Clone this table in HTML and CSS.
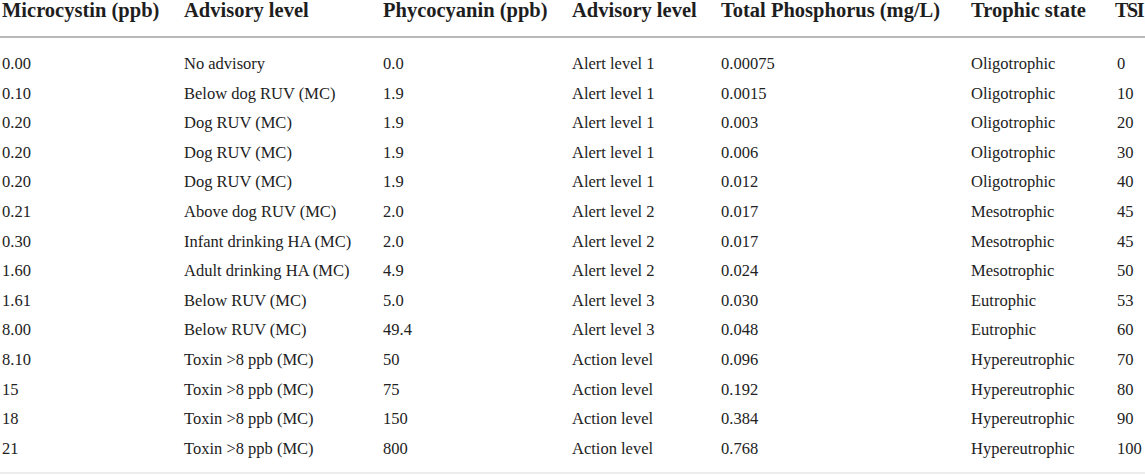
FILE: index.html
```html
<!DOCTYPE html>
<html>
<head>
	<title>Advisory levels</title>
	<meta http-equiv="Content-Type" content="text/html; charset=UTF-8">
	<link rel="stylesheet" href="styles.css">
</head>
<body>
	<table class="levels">
		<colgroup>
			<col class="c-mc">
			<col class="c-adv1">
			<col class="c-pc">
			<col class="c-adv2">
			<col class="c-tp">
			<col class="c-troph">
			<col class="c-tsi">
		</colgroup>
		<thead>
			<tr>
				<th>Microcystin (ppb)</th>
				<th>Advisory level</th>
				<th>Phycocyanin (ppb)</th>
				<th>Advisory level</th>
				<th>Total Phosphorus (mg/L)</th>
				<th>Trophic state</th>
				<th class="tsi-head">TSI</th>
			</tr>
		</thead>
		<tbody>
			<tr><td>0.00</td><td>No advisory</td><td>0.0</td><td>Alert level 1</td><td>0.00075</td><td>Oligotrophic</td><td>0</td></tr>
			<tr><td>0.10</td><td>Below dog RUV (MC)</td><td>1.9</td><td>Alert level 1</td><td>0.0015</td><td>Oligotrophic</td><td>10</td></tr>
			<tr><td>0.20</td><td>Dog RUV (MC)</td><td>1.9</td><td>Alert level 1</td><td>0.003</td><td>Oligotrophic</td><td>20</td></tr>
			<tr><td>0.20</td><td>Dog RUV (MC)</td><td>1.9</td><td>Alert level 1</td><td>0.006</td><td>Oligotrophic</td><td>30</td></tr>
			<tr><td>0.20</td><td>Dog RUV (MC)</td><td>1.9</td><td>Alert level 1</td><td>0.012</td><td>Oligotrophic</td><td>40</td></tr>
			<tr><td>0.21</td><td>Above dog RUV (MC)</td><td>2.0</td><td>Alert level 2</td><td>0.017</td><td>Mesotrophic</td><td>45</td></tr>
			<tr><td>0.30</td><td>Infant drinking HA (MC)</td><td>2.0</td><td>Alert level 2</td><td>0.017</td><td>Mesotrophic</td><td>45</td></tr>
			<tr><td>1.60</td><td>Adult drinking HA (MC)</td><td>4.9</td><td>Alert level 2</td><td>0.024</td><td>Mesotrophic</td><td>50</td></tr>
			<tr><td>1.61</td><td>Below RUV (MC)</td><td>5.0</td><td>Alert level 3</td><td>0.030</td><td>Eutrophic</td><td>53</td></tr>
			<tr><td>8.00</td><td>Below RUV (MC)</td><td>49.4</td><td>Alert level 3</td><td>0.048</td><td>Eutrophic</td><td>60</td></tr>
			<tr><td>8.10</td><td>Toxin &gt;8 ppb (MC)</td><td>50</td><td>Action level</td><td>0.096</td><td>Hypereutrophic</td><td>70</td></tr>
			<tr><td>15</td><td>Toxin &gt;8 ppb (MC)</td><td>75</td><td>Action level</td><td>0.192</td><td>Hypereutrophic</td><td>80</td></tr>
			<tr><td>18</td><td>Toxin &gt;8 ppb (MC)</td><td>150</td><td>Action level</td><td>0.384</td><td>Hypereutrophic</td><td>90</td></tr>
			<tr><td>21</td><td>Toxin &gt;8 ppb (MC)</td><td>800</td><td>Action level</td><td>0.768</td><td>Hypereutrophic</td><td>100</td></tr>
		</tbody>
	</table>
</body>
</html>
```

FILE: styles.css
```css
html {
	overflow: hidden;
}
body {
	margin: 0;
	background: #FFFFFF;
	color: #222222;
	font-family: "Liberation Serif", "Times New Roman", serif;
}
.levels {
	width: 1145px;
	table-layout: fixed;
	border-collapse: collapse;
	border-bottom: 2px solid #ececec;
}
.c-mc { width: 182px; }
.c-adv1 { width: 199px; }
.c-pc { width: 189px; }
.c-adv2 { width: 149px; }
.c-tp { width: 250px; }
.c-troph { width: 146px; }
.c-tsi { width: 30px; }

.levels th, .levels td {
	text-align: left;
	white-space: nowrap;
	padding: 0 0 0 2px;
	vertical-align: middle;
}
.levels th {
	font-size: 20.5px;
	font-weight: bold;
	line-height: 20px;
	padding-bottom: 16px;
	border-bottom: 2px solid #b9b9b9;
	color: #1e1e1e;
}
.levels th.tsi-head {
	padding-left: 0;
	font-size: 20px;
	letter-spacing: -1.3px;
}
.levels td {
	font-size: 16.5px;
	line-height: 29.6px;
}
.levels tbody tr:first-child td {
	padding-top: 11px;
}
.levels tbody tr:last-child td {
	padding-bottom: 9px;
}
```
